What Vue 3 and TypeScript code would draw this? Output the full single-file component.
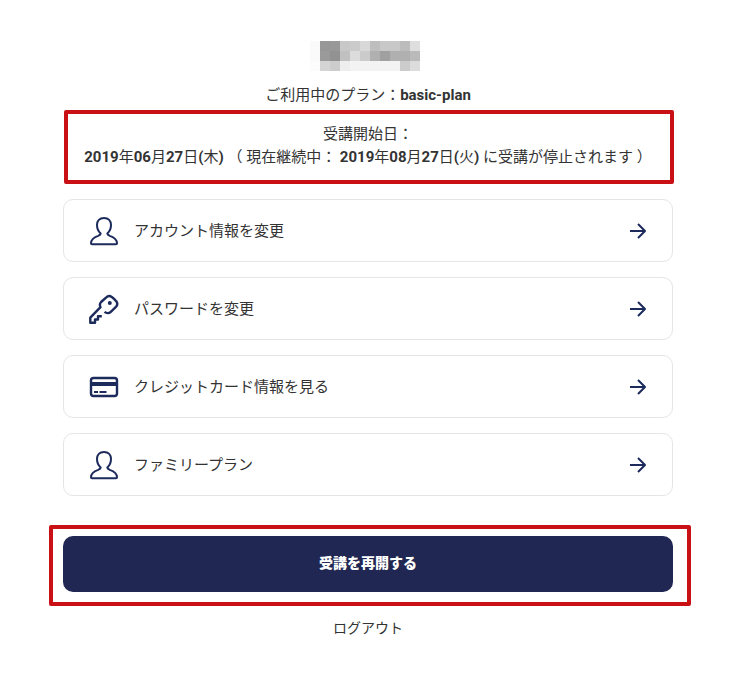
<script setup lang="ts">
type IconName = 'user' | 'key' | 'card'

interface MenuItem {
  label: string
  icon: IconName
}

const menu: MenuItem[] = [
  { label: 'アカウント情報を変更', icon: 'user' },
  { label: 'パスワードを変更', icon: 'key' },
  { label: 'クレジットカード情報を見る', icon: 'card' },
  { label: 'ファミリープラン', icon: 'user' },
]

// Grey levels of the masked account name, one number per tile
const mosaic: number[][] = [
  [250, 151, 152, 200, 203, 216, 190, 200, 200, 188, 222],
  [250, 154, 146, 192, 220, 203, 176, 160, 176, 176, 186],
  [252, 212, 204, 238, 243, 243, 243, 243, 243, 204, 220],
]
</script>

<template>
  <main class="page">
    <svg class="masked-name" viewBox="0 0 110 30" shape-rendering="crispEdges" aria-hidden="true">
      <template v-for="(row, y) in mosaic" :key="y">
        <rect
          v-for="(level, x) in row"
          :key="x"
          :x="x * 10"
          :y="y * 10"
          width="10"
          height="10"
          :fill="`rgb(${level}, ${level}, ${level})`"
        />
      </template>
    </svg>

    <p class="plan">ご利用中のプラン：<b>basic-plan</b></p>

    <section class="marked period">
      <p>受講開始日：</p>
      <p>
        <b>2019</b>年<b>06</b>月<b>27</b>日<b>(</b>木<b>)</b> （ 現在継続中： <b>2019</b>年<b>08</b>月<b>27</b>日<b>(</b>火<b>)</b> に受講が停止されます ）
      </p>
    </section>

    <nav class="menu">
      <a v-for="item in menu" :key="item.label" class="item" href="#">
        <svg v-if="item.icon === 'user'" class="icon" viewBox="0 0 32 32" aria-hidden="true">
          <path d="M16 2.900c-4.500 0-7 3-7 7 0 3.600 1.400 6.500 3.700 8.600-.2 1.300-1 1.800-2.500 2.400C5.900 22.400 3 24 3 28.300c0 .6.400.9 1 .9h24c.6 0 1-.3 1-.9 0-4.300-2.900-5.900-7.200-7.400-1.500-.6-2.300-1.100-2.500-2.400C21.600 16.400 23 13.500 23 9.900c0-4-2.500-7-7-7z" />
        </svg>
        <svg v-else-if="item.icon === 'key'" class="icon bold" viewBox="0 0 32 32" aria-hidden="true">
          <path d="M16.500 18.800c1.900 1.600 4.600 1.600 6.300 0l5.100-5c1.600-1.600 1.700-3.700.4-5.500-1.200-1.800-2.700-3.200-4.500-4.400-1.800-1.200-4-1.100-5.500.4l-5.200 4.700c-1.400 1.400-1.500 3.300-.6 5.200L2.300 24.700v5.100h4.700v-3.300h3v-3.200h3.800" />
          <circle class="dot" cx="21.800" cy="10" r="2" />
        </svg>
        <svg v-else class="icon bold" viewBox="0 0 32 32" aria-hidden="true">
          <rect x="3" y="7" width="26" height="18" rx="2.500" />
          <path class="stripe" d="M3 13h26" />
          <path class="digits" d="M6 21h4M11.500 21h7" />
        </svg>
        <span class="label">{{ item.label }}</span>
        <svg class="arrow" viewBox="0 0 18 18" aria-hidden="true">
          <path d="M1 9h15M9 2l7 7-7 7" />
        </svg>
      </a>
    </nav>

    <div class="marked resume">
      <button type="button">受講を再開する</button>
    </div>

    <a class="logout" href="#">ログアウト</a>
  </main>
</template>

<style>
body {
  background: #fff;
}
</style>

<style scoped>
.page {
  box-sizing: border-box;
  display: flex;
  flex-direction: column;
  padding: 41px 75px 40px 63px;
  color: #333;
  font-family: Roboto, "Noto Sans CJK JP", sans-serif;
  font-size: 15px;
  line-height: 24px;
}

p {
  margin: 0;
  text-align: center;
}

b {
  font-weight: 700;
}

.masked-name {
  width: 110px;
  height: 30px;
  align-self: center;
  margin-right: 6px;
}

.plan {
  margin-top: 12px;
}

.marked {
  border: 4px solid #c91014;
  border-radius: 2px;
}

.period {
  margin: 3px -1px 0 1px;
  padding: 9px 2px 11px 0;
  line-height: 23px;
}

.menu {
  display: flex;
  flex-direction: column;
  gap: 15px;
  margin-top: 15px;
}

.item {
  box-sizing: border-box;
  display: flex;
  align-items: center;
  height: 63px;
  padding: 0 25px 0 24px;
  border: 1px solid #e5e5e5;
  border-radius: 10px;
  color: inherit;
  text-decoration: none;
}

.icon {
  width: 32px;
  height: 32px;
  margin-right: 14px;
}

.icon,
.arrow {
  flex: none;
  fill: none;
  stroke: #1d2b5c;
  stroke-width: 2;
  stroke-linejoin: round;
}

.icon.bold {
  stroke-width: 2.4;
}

.icon .dot {
  fill: #1d2b5c;
  stroke: none;
}

.icon .stripe {
  stroke-width: 4;
}

.icon .digits {
  stroke-width: 2;
}

.label {
  flex: 1;
}

.arrow {
  width: 18px;
  height: 18px;
}

.resume {
  display: flex;
  margin: 29px -18px 0 -14px;
  padding: 7px 14px 10px 10px;
}

button {
  flex: 1;
  height: 56px;
  padding: 0 0 2px;
  border: 0;
  border-radius: 10px;
  background: #1f2752;
  color: #fff;
  font: 900 14px/24px Roboto, "Noto Sans CJK JP", sans-serif;
  cursor: pointer;
}

.logout {
  align-self: center;
  margin-top: 10px;
  color: inherit;
  font-size: 14px;
  text-decoration: none;
}
</style>
